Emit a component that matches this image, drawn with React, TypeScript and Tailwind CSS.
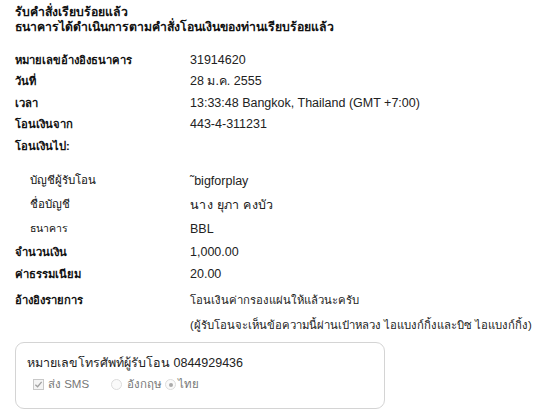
const font = { fontFamily: '"Liberation Sans", Arial, sans-serif' };

type RowProps = {
  label: string;
  value?: string;
  sub?: boolean;
  h: string;
  labelSize?: string;
  valueClass?: string;
};

function Row({ label, value, sub, h, labelSize = "text-[11.25px]", valueClass = "text-[12.5px]" }: RowProps) {
  return (
    <div className={`flex items-center ${h}`}>
      <div className={`w-[175px] shrink-0 ${labelSize} ${sub ? "pl-[15px] font-normal" : "font-bold"}`}>
        {label}
      </div>
      <div className={`whitespace-nowrap text-[#222] ${valueClass}`}>{value}</div>
    </div>
  );
}

export default function App() {
  return (
    <div className="h-[420px] w-[541px] bg-white text-[#111]" style={font}>
      <div className="pl-[15px] pt-[5px] text-[12.25px] font-bold leading-[15px]">
        <p>รับคำสั่งเรียบร้อยแล้ว</p>
        <p>ธนาคารได้ดำเนินการตามคำสั่งโอนเงินของท่านเรียบร้อยแล้ว</p>
      </div>

      <div className="mt-[14.25px] pl-[15px]">
        <Row label="หมายเลขอ้างอิงธนาคาร" value="31914620" h="h-[21.5px]" />
        <Row label="วันที่" value="28 ม.ค. 2555" h="h-[21.5px]" />
        <Row label="เวลา" value="13:33:48 Bangkok, Thailand (GMT +7:00)" h="h-[21.5px]" />
        <Row label="โอนเงินจาก" value="443-4-311231" h="h-[21.5px]" />
        <div className="mb-[12.25px]">
          <Row label="โอนเงินไป:" h="h-[21.5px]" />
        </div>
        <Row label="บัญชีผู้รับโอน" value="˜bigforplay" sub labelSize="text-[11.5px]" h="h-[24px]" />
        <Row
          label="ชื่อบัญชี"
          value="นาง ยุภา คงบัว"
          sub
          labelSize="text-[11.5px]"
          valueClass="text-[12.5px] tracking-[0.3px]"
          h="h-[24px]"
        />
        <Row label="ธนาคาร" value="BBL" sub labelSize="text-[10.5px]" h="h-[24px]" />
        <Row label="จำนวนเงิน" value="1,000.00" h="h-[22px]" />
        <Row label="ค่าธรรมเนียม" value="20.00" h="h-[22px]" />
        <div className="mt-[2.5px] flex">
          <div className="flex h-[25px] w-[175px] shrink-0 items-center text-[11.25px] font-bold">
            อ้างอิงรายการ
          </div>
          <div className="whitespace-nowrap text-[11.3px] leading-[25px] text-[#222]">
            <p>โอนเงินค่ากรองแผ่นให้แล้วนะครับ</p>
            <p>(ผู้รับโอนจะเห็นข้อความนี้ผ่านเป๋าหลวง ไอแบงก์กิ้งและบิซ ไอแบงก์กิ้ง)</p>
          </div>
        </div>
      </div>

      <div className="ml-[15px] mt-[4.5px] h-[67px] w-[370px] rounded-[9px] border border-[#d4d4d4] px-[11px] pt-[10px] text-[#222]">
        <p className="text-[12.5px] leading-[21px]">หมายเลขโทรศัพท์ผู้รับโอน 0844929436</p>
        <div className="flex h-[21px] items-center pl-[6px] text-[11.5px]">
          <span className="flex h-[11px] w-[11px] items-center justify-center border border-[#c8c8c8] bg-[#f4f4f4]">
            <svg viewBox="0 0 10 10" className="h-[9px] w-[9px]">
              <path d="M1.5 5.2 L4 7.5 L8.5 2" fill="none" stroke="#a0a0a0" strokeWidth="1.4" />
            </svg>
          </span>
          <span className="ml-[4px] text-[#777]">ส่ง SMS</span>
          <span className="ml-[22px] h-[11px] w-[11px] rounded-full border border-[#dcdcdc] bg-[#fafafa]" />
          <span className="ml-[5px] text-[#777]">อังกฤษ</span>
          <span className="ml-[3px] flex h-[11px] w-[11px] items-center justify-center rounded-full border border-[#dcdcdc] bg-[#fafafa]">
            <span className="h-[4px] w-[4px] rounded-full bg-[#aaa]" />
          </span>
          <span className="ml-[2px] text-[#777]">ไทย</span>
        </div>
      </div>
    </div>
  );
}
